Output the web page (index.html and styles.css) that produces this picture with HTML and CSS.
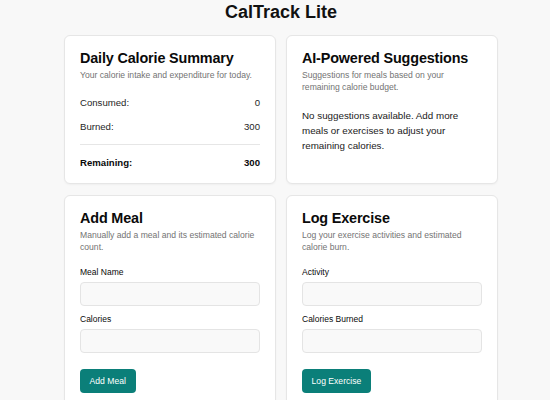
FILE: index.html
```html
<!DOCTYPE html>
<html lang="en">
<head>
<meta charset="utf-8">
<title>CalTrack Lite</title>
<link rel="stylesheet" href="styles.css">
</head>
<body>
<main class="app">
  <h1 class="app-title">CalTrack Lite</h1>
  <div class="grid">
    <section class="card">
      <div class="card-header">
        <h2 class="card-title">Daily Calorie Summary</h2>
        <p class="card-desc">Your calorie intake and expenditure for today.</p>
      </div>
      <div class="card-content">
        <div class="stat-row"><span>Consumed:</span><span>0</span></div>
        <div class="stat-row"><span>Burned:</span><span>300</span></div>
        <div class="stat-row stat-total"><span>Remaining:</span><span>300</span></div>
      </div>
    </section>

    <section class="card">
      <div class="card-header">
        <h2 class="card-title">AI-Powered Suggestions</h2>
        <p class="card-desc card-desc-narrow">Suggestions for meals based on your remaining calorie budget.</p>
      </div>
      <div class="card-content">
        <p class="empty-text">No suggestions available. Add more meals or exercises to adjust your remaining calories.</p>
      </div>
    </section>

    <section class="card">
      <div class="card-header">
        <h2 class="card-title">Add Meal</h2>
        <p class="card-desc">Manually add a meal and its estimated calorie count.</p>
      </div>
      <form class="card-content form">
        <div class="field">
          <label class="field-label" for="meal-name">Meal Name</label>
          <input class="field-input" id="meal-name" type="text">
        </div>
        <div class="field">
          <label class="field-label" for="meal-cal">Calories</label>
          <input class="field-input" id="meal-cal" type="text">
        </div>
        <button class="btn" type="button">Add Meal</button>
      </form>
    </section>

    <section class="card">
      <div class="card-header">
        <h2 class="card-title">Log Exercise</h2>
        <p class="card-desc">Log your exercise activities and estimated calorie burn.</p>
      </div>
      <form class="card-content form">
        <div class="field">
          <label class="field-label" for="activity">Activity</label>
          <input class="field-input" id="activity" type="text">
        </div>
        <div class="field">
          <label class="field-label" for="burned">Calories Burned</label>
          <input class="field-input" id="burned" type="text">
        </div>
        <button class="btn" type="button">Log Exercise</button>
      </form>
    </section>
  </div>
</main>
</body>
</html>
```

FILE: styles.css
```css
* {
  box-sizing: border-box;
}

html, body {
  margin: 0;
  padding: 0;
  background: #f8f8f8;
}

body {
  font-family: "Liberation Sans", Arial, sans-serif;
  color: #0a0a0a;
}

.app {
  width: 434px;
  margin-left: 64px;
  padding-top: 2px;
}

.app-title {
  margin: 0 0 11px;
  font-size: 18px;
  line-height: 21.6px;
  font-weight: 700;
  text-align: center;
  color: #111;
}

.grid {
  display: grid;
  grid-template-columns: 1fr 1fr;
  gap: 10.5px 10px;
}

.card {
  background: #fff;
  border: 1px solid #e6e6e6;
  border-radius: 6px;
  box-shadow: 0 1px 2px rgba(0, 0, 0, 0.04);
  padding: 15px 15px 13px;
}

.card-header {
  display: flex;
  flex-direction: column;
  gap: 3.6px;
  padding-bottom: 14.4px;
}

.card-title {
  margin: 0;
  font-size: 14.4px;
  line-height: 15px;
  font-weight: 700;
  letter-spacing: -0.15px;
  color: #0a0a0a;
}

.card-desc {
  margin: 0;
  font-size: 8.6px;
  line-height: 12px;
  color: #737373;
}

.card-desc-narrow {
  max-width: 160px;
}

.card-content {
  display: flex;
  flex-direction: column;
}

.stat-row {
  display: flex;
  justify-content: space-between;
  font-size: 9.6px;
  line-height: 14.4px;
  color: #1f1f1f;
}

.stat-row + .stat-row {
  margin-top: 9.9px;
}

.stat-total {
  font-weight: 700;
  border-top: 1px solid #e6e6e6;
  padding-top: 11px;
  color: #0a0a0a;
}

.stat-row.stat-total {
  margin-top: 9.6px;
}

.empty-text {
  margin: 0;
  font-size: 9.8px;
  line-height: 15px;
  color: #1a1a1a;
}

.form {
  margin: 0;
}

.field {
  display: flex;
  flex-direction: column;
  gap: 5.6px;
}

.field + .field {
  margin-top: 9.6px;
}

.field-label {
  font-size: 8.5px;
  line-height: 8.4px;
  color: #0a0a0a;
}

.field-input {
  height: 24px;
  width: 100%;
  border: 1px solid #e4e4e4;
  border-radius: 4px;
  background: #f9f9f9;
  font: inherit;
  font-size: 9px;
  padding: 0 7px;
  outline: none;
}

.btn {
  align-self: flex-start;
  margin-top: 16px;
  height: 24px;
  padding: 0 9.6px;
  border: none;
  border-radius: 4px;
  background: #0b7f79;
  color: #fff;
  font-family: inherit;
  font-size: 8.6px;
  cursor: pointer;
}
```
